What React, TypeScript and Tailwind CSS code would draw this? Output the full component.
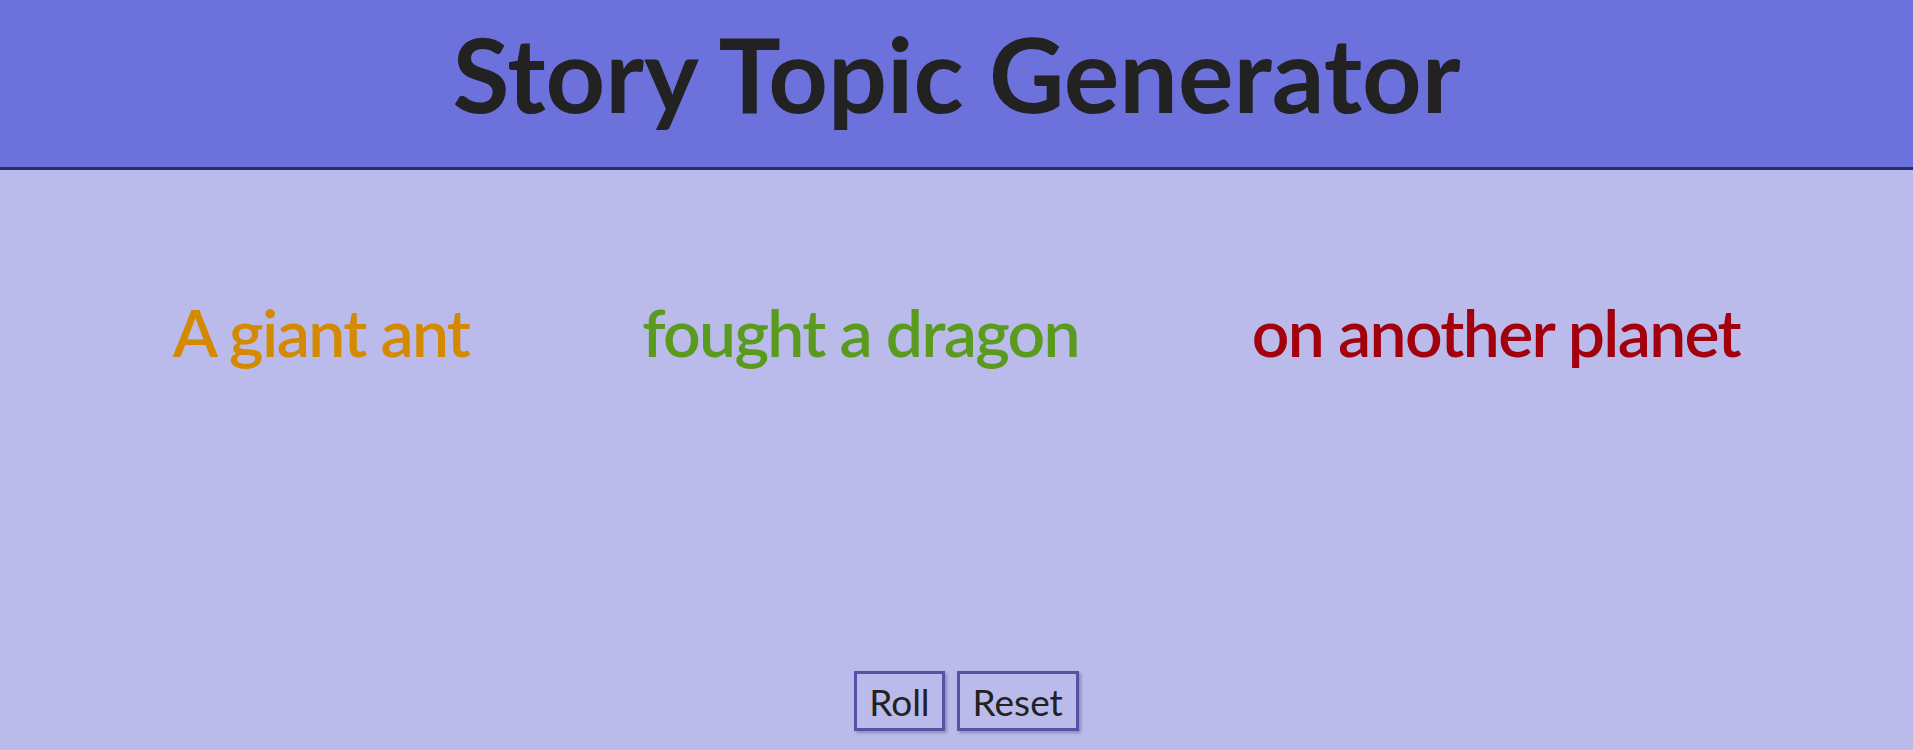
const topics = [
  { text: "A giant ant", color: "text-[#d48a00]" },
  { text: "fought a dragon", color: "text-[#5a9a1e]" },
  { text: "on another planet", color: "text-[#a3000e]" },
];

export default function App() {
  return (
    <div className="min-h-screen w-full bg-[#babbeb] font-['Lato',sans-serif] text-[#222222]">
      <header className="flex h-[170px] justify-center border-b-[3px] border-[#2d2b6b] bg-[#6d71dc] pt-[21px]">
        <h1 className="text-[104px] font-bold leading-none">Story Topic Generator</h1>
      </header>

      <section className="flex justify-evenly pt-[129px]">
        {topics.map((topic) => (
          <p
            key={topic.text}
            className={`text-[66px] font-semibold leading-none tracking-[-0.025em] ${topic.color}`}
          >
            {topic.text}
          </p>
        ))}
      </section>

      <div className="mt-[306px] flex justify-center gap-3 pl-[20px]">
        <button className="flex h-[60px] items-center border-[3px] border-[#5553a5] bg-[#babbeb] px-[12px] text-[37px] leading-none shadow-[2px_2px_3px_rgba(0,0,0,0.25)]">
          Roll
        </button>
        <button className="flex h-[60px] items-center border-[3px] border-[#5553a5] bg-[#babbeb] px-[13px] text-[37px] leading-none shadow-[2px_2px_3px_rgba(0,0,0,0.25)]">
          Reset
        </button>
      </div>
    </div>
  );
}
